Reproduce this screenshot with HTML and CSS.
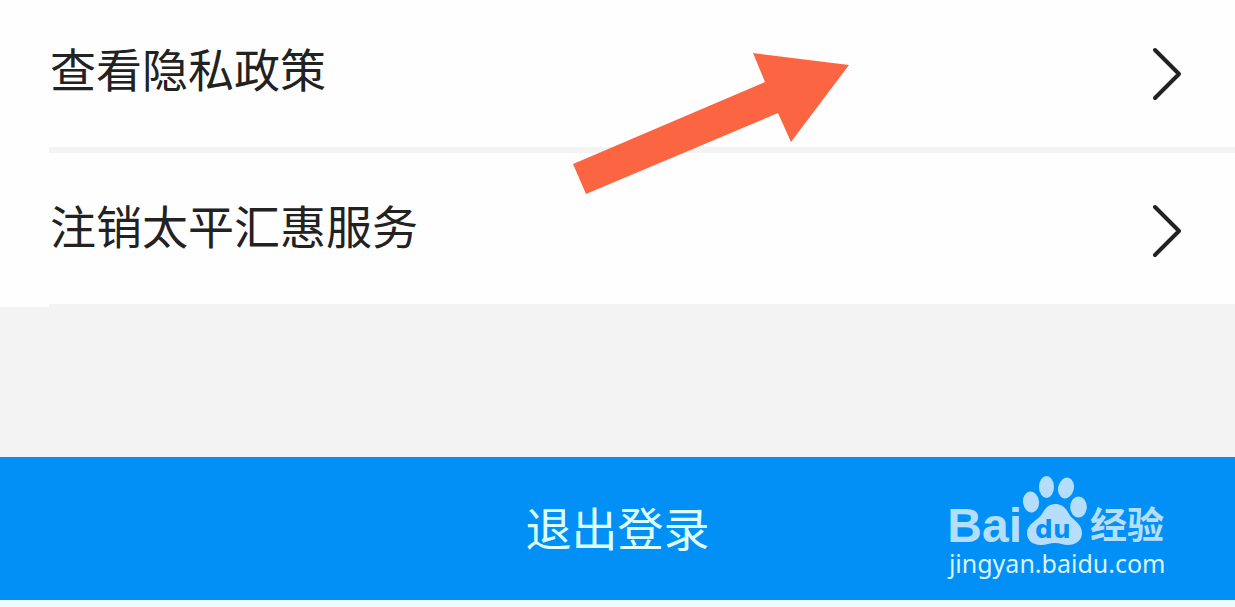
FILE: index.html
```html
<!DOCTYPE html>
<html lang="zh-CN">
<head>
<meta charset="utf-8">
<meta name="viewport" content="width=device-width, initial-scale=1">
<title>设置</title>
<link rel="stylesheet" href="styles.css">
</head>
<body>
<main class="page">
  <nav class="menu">
    <button type="button" class="row">
      <span class="row-label">查看隐私政策</span>
      <svg class="chevron" viewBox="0 0 30 54" aria-hidden="true"><path d="M3 3 27 27 3 51"/></svg>
    </button>
    <button type="button" class="row">
      <span class="row-label">注销太平汇惠服务</span>
      <svg class="chevron" viewBox="0 0 30 54" aria-hidden="true"><path d="M3 3 27 27 3 51"/></svg>
    </button>
    <svg class="arrow" viewBox="0 0 276 142" aria-hidden="true"><path d="M0 111 192 29 180 0 276 12 218 89 205 60 13 141Z"/></svg>
  </nav>
  <section class="actions">
    <button type="button" class="logout">退出登录</button>
    <div class="watermark">
      <div class="brand">
        <span class="brand-bai">Bai</span>
        <svg class="paw" viewBox="0 0 64 70" role="img" aria-label="du">
          <ellipse cx="8" cy="26" rx="8" ry="10.500" transform="rotate(-8 8 26)"/>
          <ellipse cx="23.500" cy="11" rx="7.500" ry="11"/>
          <ellipse cx="43" cy="12" rx="7.800" ry="10.500" transform="rotate(14 43 12)"/>
          <ellipse cx="55.500" cy="31" rx="8.300" ry="10.500"/>
          <path d="M32 28C39 28 43 32 46 38C49 44 59 47 59 57C59 65 52 69 45 69C40 69 37 67 32 67C27 67 23 69 18 69C9 69 4 64 4 57C4 48 15 44 19 38C22 32 26 28 32 28Z"/>
          <text x="12" y="62" class="paw-text">du</text>
        </svg>
        <span class="brand-name">经验</span>
      </div>
      <div class="brand-url">jingyan.baidu.com</div>
    </div>
  </section>
</main>
</body>
</html>
```
FILE: styles.css
```css
body {
  margin: 0;
  background: #f3f3f3;
  font-family: "Noto Sans CJK SC", sans-serif;
}

.page {
  display: flex;
  flex-direction: column;
  gap: 150px;
}

.menu {
  position: relative;
  background: linear-gradient(#f3f3f3, #f3f3f3) right bottom / calc(100% - 49px) 3px no-repeat #fefefe;
  padding-bottom: 3px;
}

.row {
  display: flex;
  align-items: center;
  justify-content: space-between;
  width: 100%;
  padding: 47px 53px 46px 50px;
  border: 0;
  background: transparent;
  color: #222;
  font: inherit;
  font-size: 46px;
  line-height: 40px;
  text-align: left;
  cursor: pointer;
}

.row:first-child {
  padding-bottom: 52px;
  background: linear-gradient(#f3f3f3, #f3f3f3) right bottom / calc(100% - 49px) 6px no-repeat;
}

.row:nth-child(2) {
  padding-top: 51px;
}

.row-label {
  padding-bottom: 14px;
}

.chevron {
  width: 30px;
  height: 54px;
  fill: none;
  stroke: #222;
  stroke-width: 4;
  stroke-linecap: round;
  stroke-linejoin: round;
}

.arrow {
  position: absolute;
  left: 573px;
  top: 53px;
  width: 276px;
  height: 142px;
  fill: #fb6542;
  pointer-events: none;
}

.actions {
  position: relative;
  border-bottom: 7px solid #effaff;
}

.logout {
  display: block;
  width: 100%;
  padding: 42px 0 47px;
  border: 0;
  background: #0290f6;
  color: #dcffff;
  font: inherit;
  font-size: 46px;
  line-height: 54px;
  cursor: pointer;
}

.watermark {
  position: absolute;
  right: 68px;
  top: 19px;
  color: #b5defc;
  pointer-events: none;
}

.brand {
  display: flex;
  align-items: flex-end;
  height: 70px;
  padding-right: 3px;
}

.brand-bai {
  font: bold 48px/40px "Liberation Sans", sans-serif;
}

.paw {
  width: 64px;
  height: 70px;
  margin-left: 1px;
  fill: #b5defc;
}

.paw-text {
  font: bold 25px "DejaVu Sans", sans-serif;
  fill: #0290f6;
}

.brand-name {
  margin-left: 3px;
  padding-bottom: 4px;
  font-size: 37px;
  font-weight: bold;
  line-height: 38px;
}

.brand-url {
  color: #dcf2ff;
  font: 25px/34px "Noto Sans", sans-serif;
  text-align: center;
}
```
